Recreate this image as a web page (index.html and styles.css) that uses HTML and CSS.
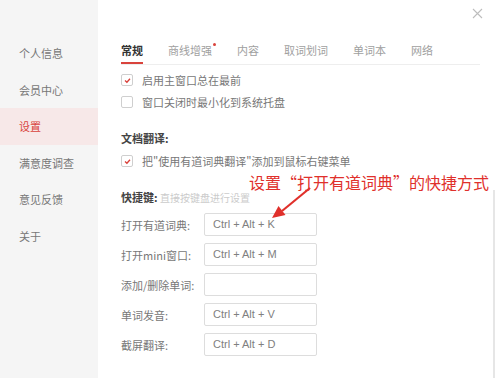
FILE: index.html
```html
<!DOCTYPE html>
<html lang="zh-CN">
<head>
    <meta charset="UTF-8">
    <meta name="viewport" content="width=device-width, initial-scale=1.0">
    <title>设置</title>
    <link rel="stylesheet" href="styles.css">
</head>
<body>
    <div class="window">
        <div class="sidebar">
            <div class="nav-item">个人信息</div>
            <div class="nav-item">会员中心</div>
            <div class="nav-item active">设置</div>
            <div class="nav-item">满意度调查</div>
            <div class="nav-item">意见反馈</div>
            <div class="nav-item">关于</div>
        </div>

        <div class="panel">
            <div class="panel-top">
                <svg class="close" width="11" height="11" viewBox="0 0 11 11">
                    <path d="M1 1 L10 10 M10 1 L1 10" stroke="#bdbdbd" stroke-width="1.1" fill="none"/>
                </svg>
            </div>

            <div class="tabs">
                <div class="tab active">常规</div>
                <div class="tab dot">商线增强</div>
                <div class="tab">内容</div>
                <div class="tab">取词划词</div>
                <div class="tab">单词本</div>
                <div class="tab">网络</div>
            </div>

            <div class="group first">
                <div class="check-row">
                    <span class="box">
                        <svg width="9" height="9" viewBox="0 0 9 9"><path d="M2 4.6 L3.9 6.3 L7 2.8" stroke="#d9403a" stroke-width="1.3" fill="none"/></svg>
                    </span>
                    启用主窗口总在最前
                </div>
                <div class="check-row">
                    <span class="box"></span>
                    窗口关闭时最小化到系统托盘
                </div>
            </div>

            <div class="section-title">文档翻译:</div>
            <div class="group">
                <div class="check-row">
                    <span class="box">
                        <svg width="9" height="9" viewBox="0 0 9 9"><path d="M2 4.6 L3.9 6.3 L7 2.8" stroke="#d9403a" stroke-width="1.3" fill="none"/></svg>
                    </span>
                    把"使用有道词典翻译"添加到鼠标右键菜单
                </div>
            </div>

            <div class="section-title">快捷键: <span class="hint">直接按键盘进行设置</span></div>
            <div class="keys">
                <div class="key-row"><label>打开有道词典:</label><div class="key-input">Ctrl + Alt + K</div></div>
                <div class="key-row"><label>打开mini窗口:</label><div class="key-input">Ctrl + Alt + M</div></div>
                <div class="key-row"><label>添加/删除单词:</label><div class="key-input"></div></div>
                <div class="key-row"><label>单词发音:</label><div class="key-input">Ctrl + Alt + V</div></div>
                <div class="key-row"><label>截屏翻译:</label><div class="key-input">Ctrl + Alt + D</div></div>
            </div>
        </div>

        <div class="scroll-track"></div>

        <div class="note">设置“打开有道词典”的快捷方式</div>
        <svg class="arrow" width="60" height="50" viewBox="0 0 60 50">
            <path d="M52 2 L24 25" stroke="#e0302b" stroke-width="2.2" fill="none"/>
            <path d="M14 32 L20.5 20 L27.5 29 Z" fill="#e0302b"/>
        </svg>
    </div>
</body>
</html>
```

FILE: styles.css
```css
body {
    margin: 0;
    background: #fff;
    font-family: "Noto Sans CJK SC", "Microsoft YaHei", sans-serif;
    font-size: 11px;
    color: #777;
}
.window {
    position: relative;
    display: flex;
    width: 497px;
    height: 390px;
    background: #fff;
}
.sidebar {
    width: 98px;
    height: 378px;
    padding-top: 35px;
    box-sizing: border-box;
    background: #f5f5f5;
}
.nav-item {
    height: 36.5px;
    line-height: 36.5px;
    padding-left: 19px;
    color: #777;
}
.nav-item.active {
    background: #f7e8e8;
    color: #d9433c;
}
.panel {
    flex: 1;
    padding: 0 17px 0 23px;
}
.panel-top {
    display: flex;
    justify-content: flex-end;
    height: 42px;
}
.close {
    margin-top: 8px;
    margin-right: -3px;
}
.tabs {
    display: flex;
    border-bottom: 1px solid #eee;
}
.tab {
    position: relative;
    line-height: 16px;
    padding-bottom: 4px;
    border-bottom: 2px solid transparent;
    margin-right: 25px;
    color: #a0a0a0;
}
.tab.active {
    color: #333;
    font-weight: bold;
    border-bottom-color: #d9433c;
}
.tab.dot::after {
    content: "";
    position: absolute;
    right: -4px;
    top: 1px;
    width: 3px;
    height: 3px;
    border-radius: 50%;
    background: #d9433c;
}
.group.first {
    margin-top: 4px;
}
.group {
    margin-top: 4px;
}
.check-row {
    display: flex;
    align-items: center;
    height: 22px;
    color: #777;
}
.box {
    display: flex;
    align-items: center;
    justify-content: center;
    width: 10px;
    height: 10px;
    border: 1px solid #cfcfcf;
    border-radius: 2px;
    margin-right: 9px;
    background: #fff;
}
.section-title {
    margin-top: 17px;
    line-height: 16px;
    color: #444;
    font-weight: bold;
}
.hint {
    font-weight: normal;
    color: #cbcbcb;
    font-size: 10px;
}
.keys {
    display: flex;
    flex-direction: column;
    gap: 7px;
    margin-top: 7px;
}
.key-row {
    display: flex;
    align-items: center;
    height: 23px;
}
.key-row label {
    width: 83px;
    color: #777;
}
.key-input {
    width: 113px;
    height: 23px;
    box-sizing: border-box;
    border: 1px solid #ddd;
    border-radius: 2px;
    padding-left: 8px;
    line-height: 21px;
    font-family: "Liberation Sans", Arial, sans-serif;
    color: #808080;
}
.scroll-track {
    position: absolute;
    left: 493px;
    top: 190px;
    width: 2px;
    height: 188px;
    background: #e6e6e6;
}
.note {
    position: absolute;
    left: 249px;
    top: 171px;
    font-size: 16px;
    line-height: 22px;
    color: #e0302b;
    white-space: nowrap;
}
.arrow {
    position: absolute;
    left: 258px;
    top: 186px;
}
```
